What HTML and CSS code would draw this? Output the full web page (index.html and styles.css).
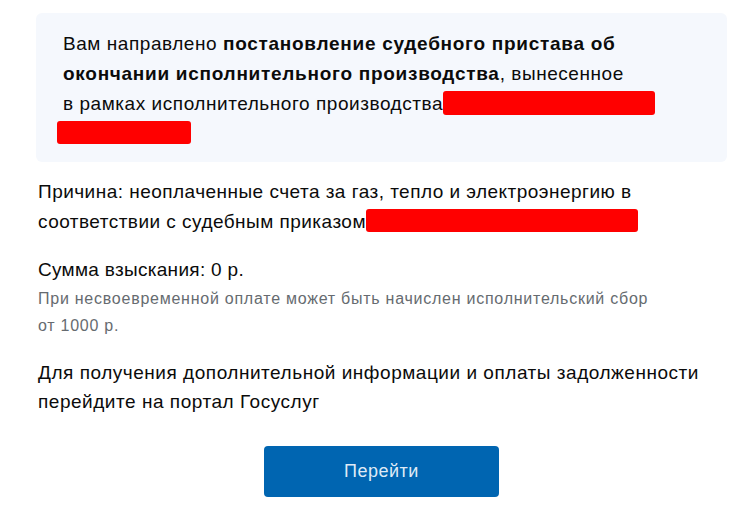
FILE: index.html
```html
<!DOCTYPE html>
<html lang="ru">
<head>
<meta charset="utf-8">
<link rel="stylesheet" href="styles.css">
</head>
<body>
<div class="wrap">
  <div class="notice">
    Вам направлено <b>постановление судебного пристава об окончании исполнительного производства</b>, вынесенное<br>в рамках исполнительного производства<span class="redact r1"></span><br><span class="redact r2"></span>
  </div>
  <p class="reason">Причина: неоплаченные счета за газ, тепло и электроэнергию в соответствии с судебным приказом<span class="redact r3"></span></p>
  <p class="sum">Сумма взыскания: 0 р.</p>
  <p class="hint">При несвоевременной оплате может быть начислен исполнительский сбор<br>от 1000 р.</p>
  <p class="more">Для получения дополнительной информации и оплаты задолженности перейдите на портал Госуслуг</p>
  <div class="actions"><a class="btn" href="#">Перейти</a></div>
</div>
</body>
</html>
```
FILE: styles.css
```css
html, body { margin: 0; padding: 0; background: #fff; }
body { font-family: "Liberation Sans", Arial, sans-serif; color: #0b0b0b; }
.wrap { width: 691px; margin-left: 36px; padding-top: 13px; }
.notice {
  background: #f5f8fd;
  border-radius: 6px;
  padding: 16px 40px 13px 27px;
  font-size: 19px;
  line-height: 30px;
  letter-spacing: 0.55px;
}
.notice b { font-weight: bold; letter-spacing: 0.72px; }
.redact { display: inline-block; background: #ff0000; border-radius: 3px; vertical-align: middle; letter-spacing: 0; }
.r1 { width: 212px; height: 24px; margin-top: -4px; }
.r2 { width: 134px; height: 23px; margin-left: -6px; margin-top: -4px; }
.r3 { width: 272px; height: 23px; margin-top: -4px; }
p { margin: 0; }
.reason { margin-top: 15px; margin-left: 2px; font-size: 19px; line-height: 30px; letter-spacing: 0.47px; }
.sum { margin-top: 18px; margin-left: 2px; font-size: 19px; line-height: 30px; letter-spacing: 0.3px; }
.hint { margin-left: 2px; font-size: 16px; line-height: 27px; color: #666b70; letter-spacing: 0.75px; }
.more { margin-top: 19px; margin-left: 2px; font-size: 19px; line-height: 29px; letter-spacing: 0.53px; }
.actions { display: flex; justify-content: center; margin-top: 30px; }
.btn {
  display: flex; align-items: center; justify-content: center;
  width: 235px; height: 51px;
  background: #0065b1; color: #dfeaf6;
  border-radius: 4px;
  font-size: 18px; text-decoration: none;
  letter-spacing: 0.5px;
}
```
